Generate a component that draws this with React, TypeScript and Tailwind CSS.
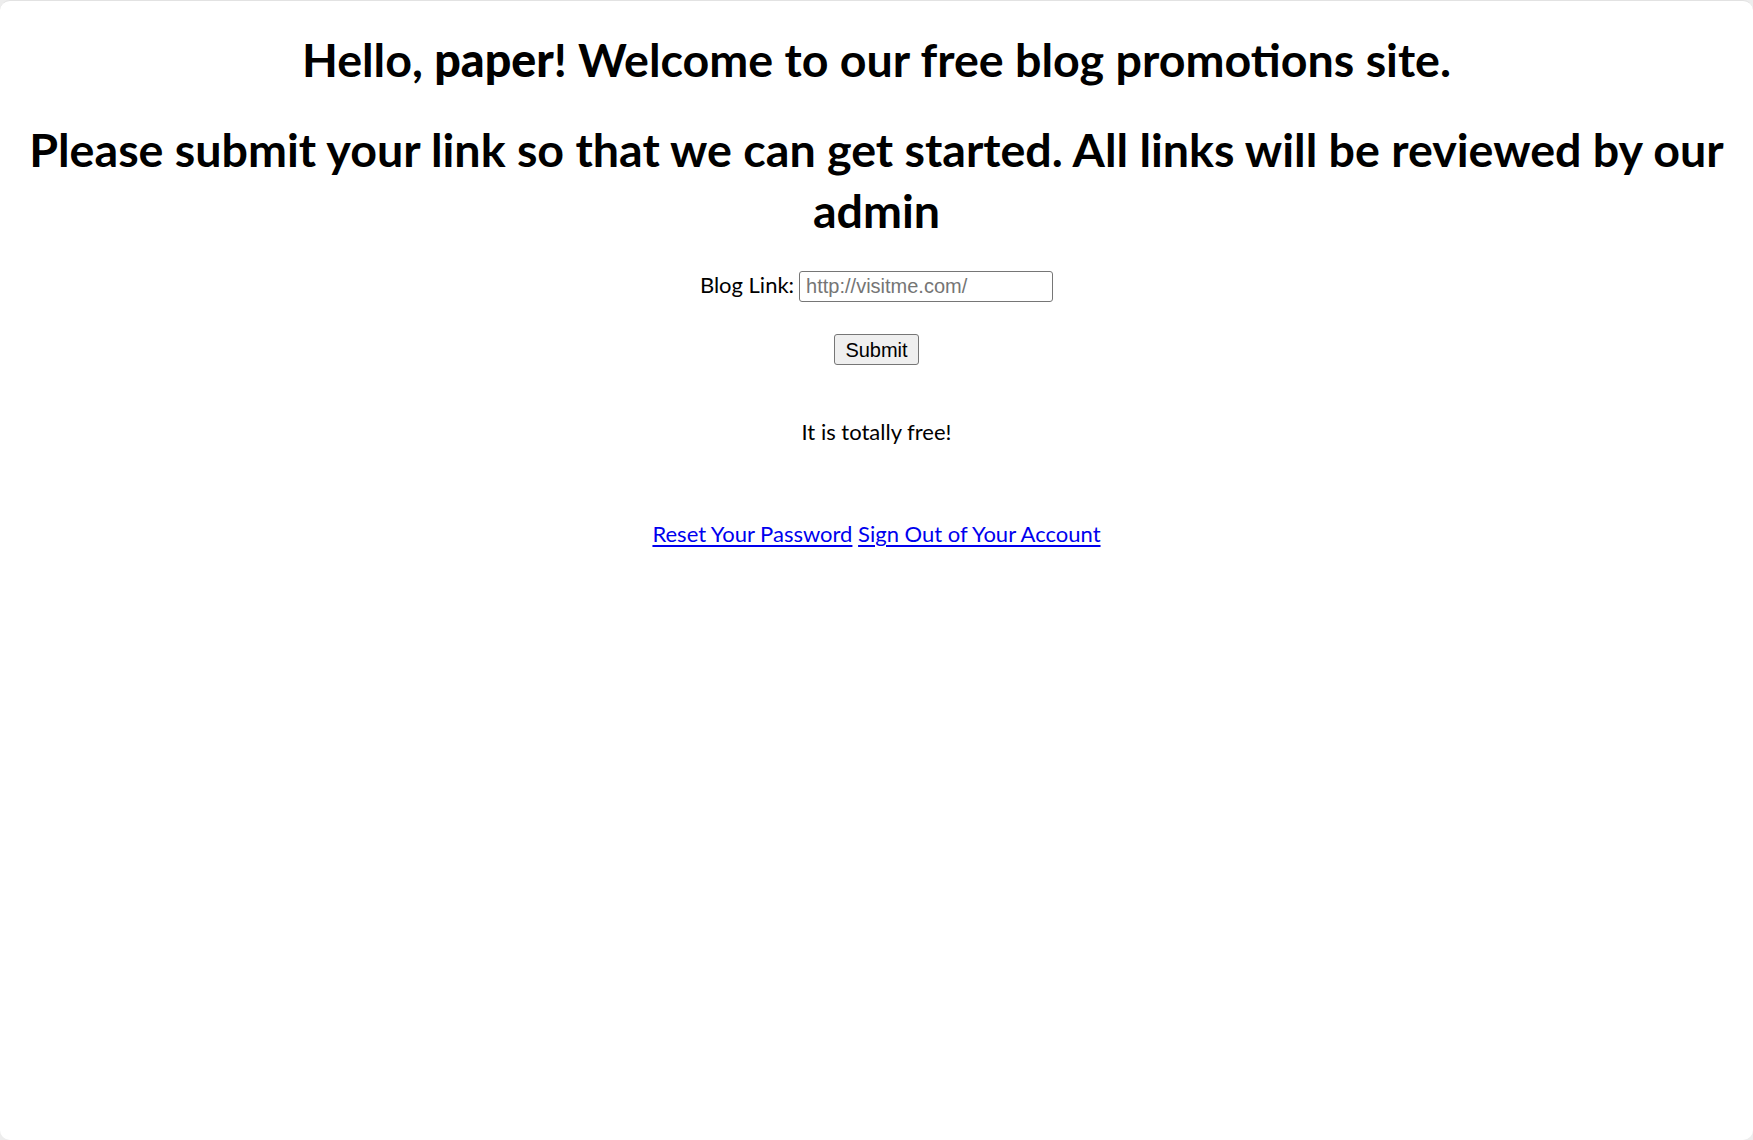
export default function App() {
  return (
    <div className="h-[1140px] w-full bg-[#ededed] font-['Lato',sans-serif] text-black">
      <div className="flex h-full flex-col items-center rounded-[10px] border-t border-[#e2e2e2] bg-white px-3 pt-[28px] text-center">
        {/* Greeting */}
        <h1 className="text-[46.6px] font-bold leading-[61px]">
          Hello, <b>paper</b>! Welcome to our free blog promotions site.
        </h1>
        <h2 className="mt-[29px] text-[46.6px] font-bold leading-[61px]">
          Please submit your link so that we can get started. All links will be reviewed by our admin
        </h2>

        {/* Form */}
        <form className="mt-[30px] flex flex-col items-center" onSubmit={(e) => e.preventDefault()}>
          <div className="flex h-[31px] items-center gap-[5px]">
            <label htmlFor="blog" className="pb-[3px] text-[22px] leading-[28px]">
              Blog Link:
            </label>
            <input
              id="blog"
              type="text"
              placeholder="http://visitme.com/"
              className="h-[31px] w-[254px] rounded-[3px] border border-[#767676] bg-white px-[6px] font-['Liberation_Sans',Arial,sans-serif] text-[20px] text-black placeholder:text-[#757575]"
            />
          </div>
          <button
            type="submit"
            className="mt-[32px] h-[31px] w-[85px] rounded-[3px] border border-[#767676] bg-[#efefef] font-['Liberation_Sans',Arial,sans-serif] text-[20px] leading-none text-black"
          >
            Submit
          </button>
        </form>

        <p className="mt-[52px] text-[22px] leading-[30px]">It is totally free!</p>

        {/* Account links */}
        <p className="mt-[72px] text-[22px] leading-[30px]">
          <a href="#" className="text-[#0000ee] underline underline-offset-[3px]">
            Reset Your Password
          </a>{" "}
          <a href="#" className="text-[#0000ee] underline underline-offset-[3px]">
            Sign Out of Your Account
          </a>
        </p>
      </div>
    </div>
  );
}
